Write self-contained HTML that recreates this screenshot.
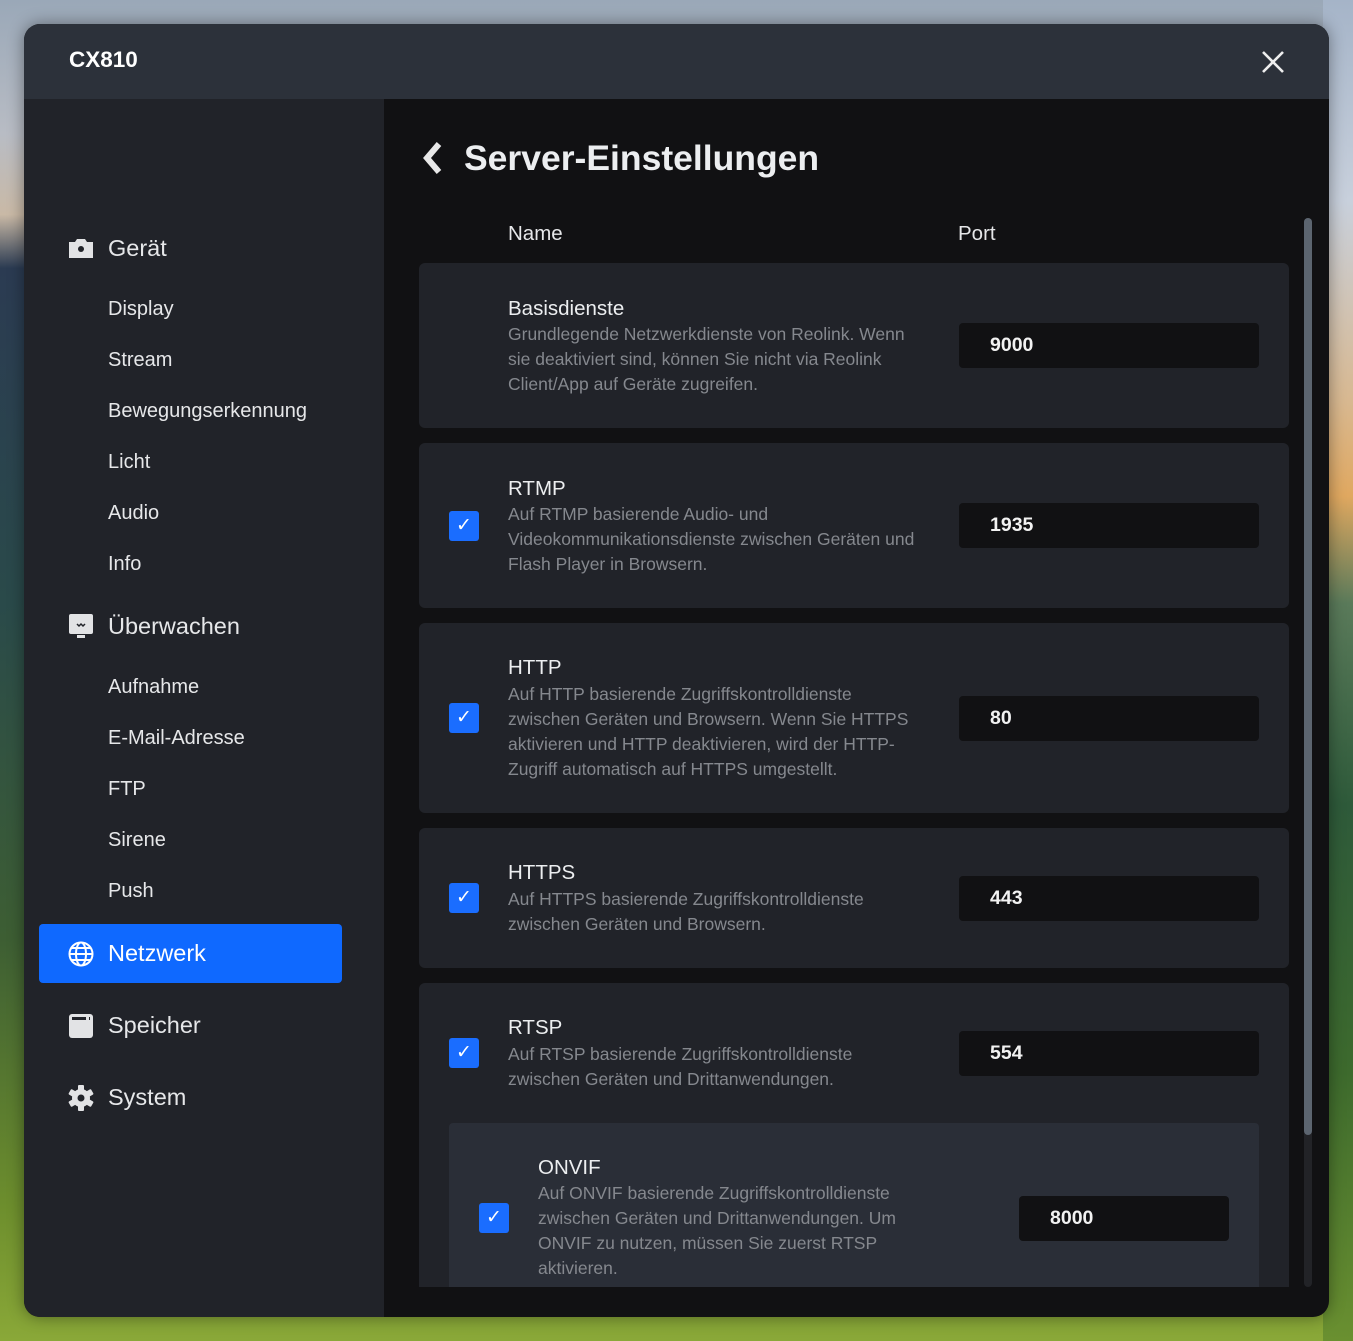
<!DOCTYPE html>
<html><head><meta charset="utf-8"><style>
*{margin:0;padding:0;box-sizing:border-box}
html,body{overflow:hidden}
body{width:1353px;height:1341px;position:relative;font-family:"Liberation Sans",Arial,sans-serif;
background:linear-gradient(180deg,#9aa8b8 0%,#b8bcc4 10%,#c9b9a6 16%,#2b3b52 20%,#2a4a4a 45%,#3d5e33 70%,#6d8e2d 90%,#8aa838 100%);}
.bgr{position:absolute;right:0;top:0;width:30px;height:1341px;background:linear-gradient(180deg,#a5b4c8 0%,#c8d0dc 15%,#d8b890 30%,#e0a860 37%,#5a7a5a 45%,#2e5a3a 60%,#3d6a2d 80%,#6a9030 100%)}
.win{position:absolute;left:24px;top:24px;width:1305px;height:1293px;border-radius:16px;overflow:hidden;background:#111113;box-shadow:0 0 16px rgba(0,0,0,.4)}
.hdr{position:absolute;left:0;top:0;width:1305px;height:75px;background:#2c313a}
.side{position:absolute;left:0;top:75px;width:360px;height:1218px;background:#212329}
.t{position:absolute;white-space:nowrap;color:#e6e7e9}
.sec{font-size:23.5px;left:84px}
.sub{font-size:20px;left:84px}
.ic{position:absolute;left:44px}
.card{position:absolute;left:395px;width:870px;background:#212329;border-radius:6px}
.cb{position:absolute;width:30px;height:30px;background:#1a6dff;border-radius:3px;color:#fff;font-size:19px;text-align:center;line-height:30px}
.inp{position:absolute;width:300px;height:45px;background:#111113;border-radius:4px;color:#f2f2f2;font-weight:bold;font-size:19.5px;line-height:45px;padding-left:31px}
.ct{position:absolute;font-size:20.5px;color:#eceef0;white-space:nowrap}
.cd{position:absolute;font-size:17.5px;line-height:25px;color:#85888e;width:422px}
</style></head><body>
<div class="bgr"></div>
<div class="win">
<div class="hdr"></div>
<div class="t" style="left:45px;top:23px;font-size:22.5px;font-weight:bold;color:#fff">CX810</div>
<svg style="position:absolute;left:1237px;top:26px" width="24" height="24" viewBox="0 0 24 24"><path d="M2 2L22 22M22 2L2 22" stroke="#eee" stroke-width="2.6"/></svg>
<div class="side"></div>
<svg class="ic" style="top:213px" width="26" height="22" viewBox="0 0 26 22"><path d="M1 5h6l2-3h8l2 3h6v16H1z" fill="#e2e3e5"/><circle cx="13" cy="12" r="3" fill="#212329"/></svg>
<div class="t sec" style="top:211px">Gerät</div>
<div class="t sub" style="top:274px">Display</div>
<div class="t sub" style="top:325px">Stream</div>
<div class="t sub" style="top:376px">Bewegungserkennung</div>
<div class="t sub" style="top:427px">Licht</div>
<div class="t sub" style="top:478px">Audio</div>
<div class="t sub" style="top:529px">Info</div>
<svg class="ic" style="top:589px" width="26" height="26" viewBox="0 0 26 26"><rect x="1" y="1" width="24" height="20" rx="2" fill="#e2e3e5"/><rect x="9" y="22" width="8" height="3" fill="#e2e3e5"/><path d="M9 11l2 2 2-2 2 2 2-2" stroke="#212329" stroke-width="1.5" fill="none"/></svg>
<div class="t sec" style="top:589px">Überwachen</div>
<div class="t sub" style="top:652px">Aufnahme</div>
<div class="t sub" style="top:703px">E-Mail-Adresse</div>
<div class="t sub" style="top:754px">FTP</div>
<div class="t sub" style="top:805px">Sirene</div>
<div class="t sub" style="top:856px">Push</div>
<div style="position:absolute;left:15px;top:900px;width:303px;height:59px;background:#0f69ff;border-radius:4px"></div>
<svg class="ic" style="top:917px" width="26" height="26" viewBox="0 0 26 26" fill="none" stroke="#fff" stroke-width="2"><circle cx="13" cy="13" r="11.5"/><ellipse cx="13" cy="13" rx="5" ry="11.5"/><path d="M1.5 13h23M3 7h20M3 19h20"/></svg>
<div class="t sec" style="top:916px;color:#fff">Netzwerk</div>
<svg class="ic" style="top:989px" width="26" height="26" viewBox="0 0 26 26"><rect x="1" y="1" width="24" height="24" rx="3" fill="#e2e3e5"/><rect x="4" y="4" width="18" height="3" fill="#212329"/><rect x="18" y="4" width="3" height="3" fill="#e2e3e5"/></svg>
<div class="t sec" style="top:988px">Speicher</div>
<svg class="ic" style="top:1061px" width="26" height="26" viewBox="0 0 26 26"><g fill="#e2e3e5"><circle cx="13" cy="13" r="9"/><rect x="10" y="0" width="6" height="26" rx="1"/><rect x="10" y="0" width="6" height="26" rx="1" transform="rotate(60 13 13)"/><rect x="10" y="0" width="6" height="26" rx="1" transform="rotate(120 13 13)"/></g><circle cx="13" cy="13" r="3.5" fill="#212329"/></svg>
<div class="t sec" style="top:1060px">System</div>

<svg style="position:absolute;left:398px;top:117px" width="22" height="34" viewBox="0 0 22 34"><path d="M17 3L5 17l12 14" stroke="#e8e8e8" stroke-width="6" fill="none"/></svg>
<div class="t" style="left:440px;top:114px;font-size:35.5px;font-weight:bold;color:#eceef0">Server-Einstellungen</div>
<div class="t" style="left:484px;top:198px;font-size:20.5px">Name</div>
<div class="t" style="left:934px;top:198px;font-size:20.5px">Port</div>

<div style="position:absolute;left:0;top:0;width:1305px;height:1263px;overflow:hidden">
<div class="card" style="top:239px;height:165px"></div>
<div class="ct" style="left:484px;top:273px">Basisdienste</div>
<div class="cd" style="left:484px;top:298px">Grundlegende Netzwerkdienste von Reolink. Wenn sie deaktiviert sind, können Sie nicht via Reolink Client/App auf Geräte zugreifen.</div>
<div class="inp" style="left:935px;top:299px">9000</div>

<div class="card" style="top:419px;height:165px"></div>
<div class="cb" style="left:425px;top:487px">✓</div>
<div class="ct" style="left:484px;top:453px">RTMP</div>
<div class="cd" style="left:484px;top:478px">Auf RTMP basierende Audio- und Videokommunikationsdienste zwischen Geräten und Flash Player in Browsern.</div>
<div class="inp" style="left:935px;top:479px">1935</div>

<div class="card" style="top:599px;height:190px"></div>
<div class="cb" style="left:425px;top:679px">✓</div>
<div class="ct" style="left:484px;top:632px">HTTP</div>
<div class="cd" style="left:484px;top:658px;width:416px">Auf HTTP basierende Zugriffskontrolldienste zwischen Geräten und Browsern. Wenn Sie HTTPS aktivieren und HTTP deaktivieren, wird der HTTP-Zugriff automatisch auf HTTPS umgestellt.</div>
<div class="inp" style="left:935px;top:672px">80</div>

<div class="card" style="top:804px;height:140px"></div>
<div class="cb" style="left:425px;top:859px">✓</div>
<div class="ct" style="left:484px;top:837px">HTTPS</div>
<div class="cd" style="left:484px;top:863px;width:400px">Auf HTTPS basierende Zugriffskontrolldienste zwischen Geräten und Browsern.</div>
<div class="inp" style="left:935px;top:852px">443</div>

<div class="card" style="top:959px;height:400px"></div>
<div class="cb" style="left:425px;top:1014px">✓</div>
<div class="ct" style="left:484px;top:992px">RTSP</div>
<div class="cd" style="left:484px;top:1018px;width:400px">Auf RTSP basierende Zugriffskontrolldienste zwischen Geräten und Drittanwendungen.</div>
<div class="inp" style="left:935px;top:1007px">554</div>

<div style="position:absolute;left:425px;top:1099px;width:810px;height:300px;background:#2a2e37;border-radius:4px"></div>
<div class="cb" style="left:455px;top:1179px">✓</div>
<div class="ct" style="left:514px;top:1132px">ONVIF</div>
<div class="cd" style="left:514px;top:1157px;width:378px">Auf ONVIF basierende Zugriffskontrolldienste zwischen Geräten und Drittanwendungen. Um ONVIF zu nutzen, müssen Sie zuerst RTSP aktivieren.</div>
<div class="inp" style="left:995px;top:1172px;width:210px">8000</div>
</div>
<div style="position:absolute;left:1280px;top:194px;width:8px;height:1069px;background:#222327;border-radius:4px"></div>
<div style="position:absolute;left:1280px;top:194px;width:8px;height:917px;background:#5c6570;border-radius:4px"></div>
</div>
</body></html>
